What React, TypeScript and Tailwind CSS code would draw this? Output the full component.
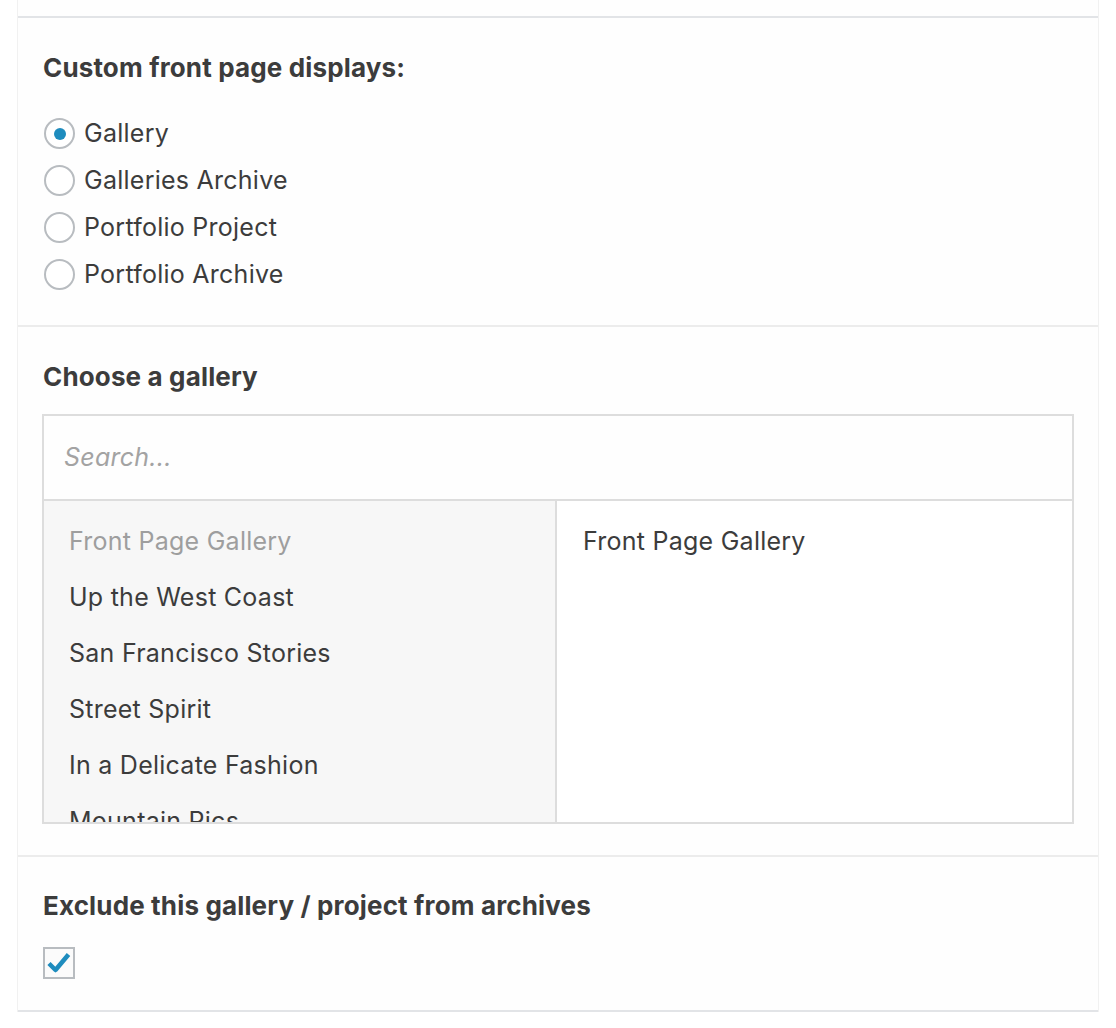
import { useState } from 'react';

const displayOptions = ['Gallery', 'Galleries Archive', 'Portfolio Project', 'Portfolio Archive'];

const galleries = [
  'Front Page Gallery',
  'Up the West Coast',
  'San Francisco Stories',
  'Street Spirit',
  'In a Delicate Fashion',
  'Mountain Pics',
  'Night Lights',
];

function Radio({ checked }: { checked: boolean }) {
  return (
    <span className="ml-px flex h-[31px] w-[31px] shrink-0 items-center justify-center rounded-full border-2 border-[#b8bcc0] bg-white">
      {checked && <span className="h-[12px] w-[12px] rounded-full bg-[#1e8cbe]" />}
    </span>
  );
}

export default function App() {
  const [display, setDisplay] = useState('Gallery');
  const [exclude, setExclude] = useState(true);

  return (
    <div
      className="min-h-screen bg-white text-[#3c3c3c]"
      style={{ fontFamily: 'Inter, "Open Sans", Arial, sans-serif' }}
    >
      <div className="ml-[17px] w-[1082px] border-x border-[#f1f1f1] bg-[#fefefe]">
        <div className="h-[16px]" />

        {/* Front page display */}
        <section className="border-t-2 border-[#e2e4e7] px-[25px] pt-[34px] pb-[27px]">
          <h2 className="text-[26px] leading-[32px] font-bold tracking-[0.15px] text-[#3c3c3c]">
            Custom front page displays:
          </h2>
          <div className="mt-[26px] flex flex-col">
            {displayOptions.map((opt) => (
              <label
                key={opt}
                className="flex h-[47px] cursor-pointer items-center gap-[9px] text-[25px] tracking-[0.25px]"
                onClick={() => setDisplay(opt)}
              >
                <Radio checked={display === opt} />
                <span>{opt}</span>
              </label>
            ))}
          </div>
        </section>

        {/* Gallery picker */}
        <section className="border-t-2 border-[#ececec] px-[25px] pt-[34px] pb-[31px]">
          <h2 className="text-[26px] leading-[32px] font-bold tracking-[0.15px] text-[#3c3c3c]">
            Choose a gallery
          </h2>
          <div className="mt-[21px] -ml-px w-[1032px] border-2 border-[#dddddd]">
            <div className="flex h-[85px] items-center border-b-2 border-[#dddddd] px-[20px]">
              <input
                placeholder="Search..."
                className="w-full bg-transparent text-[25px] italic tracking-[0.25px] text-[#3c3c3c] outline-none placeholder:text-[#a3a3a3]"
              />
            </div>
            <div className="flex h-[321px] overflow-hidden">
              <ul className="w-[513px] shrink-0 border-r-2 border-[#dddddd] bg-[#f7f7f7] pt-[13px] pl-[25px]">
                {galleries.map((g, i) => (
                  <li
                    key={g}
                    className={`flex h-[56px] items-center text-[25px] tracking-[0.25px] ${i === 0 ? 'text-[#9e9e9e]' : 'text-[#3c3c3c]'}`}
                  >
                    {g}
                  </li>
                ))}
              </ul>
              <div className="flex-1 bg-white pt-[13px] pl-[26px]">
                <div className="flex h-[56px] items-center text-[25px] tracking-[0.25px]">Front Page Gallery</div>
              </div>
            </div>
          </div>
        </section>

        {/* Archive exclusion */}
        <section className="border-t-2 border-b-2 border-t-[#ececec] border-b-[#e2e4e7] px-[25px] pt-[33px] pb-[31px]">
          <h2 className="text-[26px] leading-[32px] font-bold tracking-[0.15px] text-[#3c3c3c]">
            Exclude this gallery / project from archives
          </h2>
          <button
            type="button"
            onClick={() => setExclude(!exclude)}
            className="mt-[25px] flex h-[32px] w-[32px] items-center justify-center border-2 border-[#b8bcc0] bg-[#fbfbfb]"
          >
            {exclude && (
              <svg width="26" height="26" viewBox="0 0 26 26" fill="none">
                <path d="M3 13.5 L9.5 20 L22.5 4.5" stroke="#1e8cbe" strokeWidth="4.5" strokeLinejoin="round" />
              </svg>
            )}
          </button>
        </section>
      </div>
    </div>
  );
}
